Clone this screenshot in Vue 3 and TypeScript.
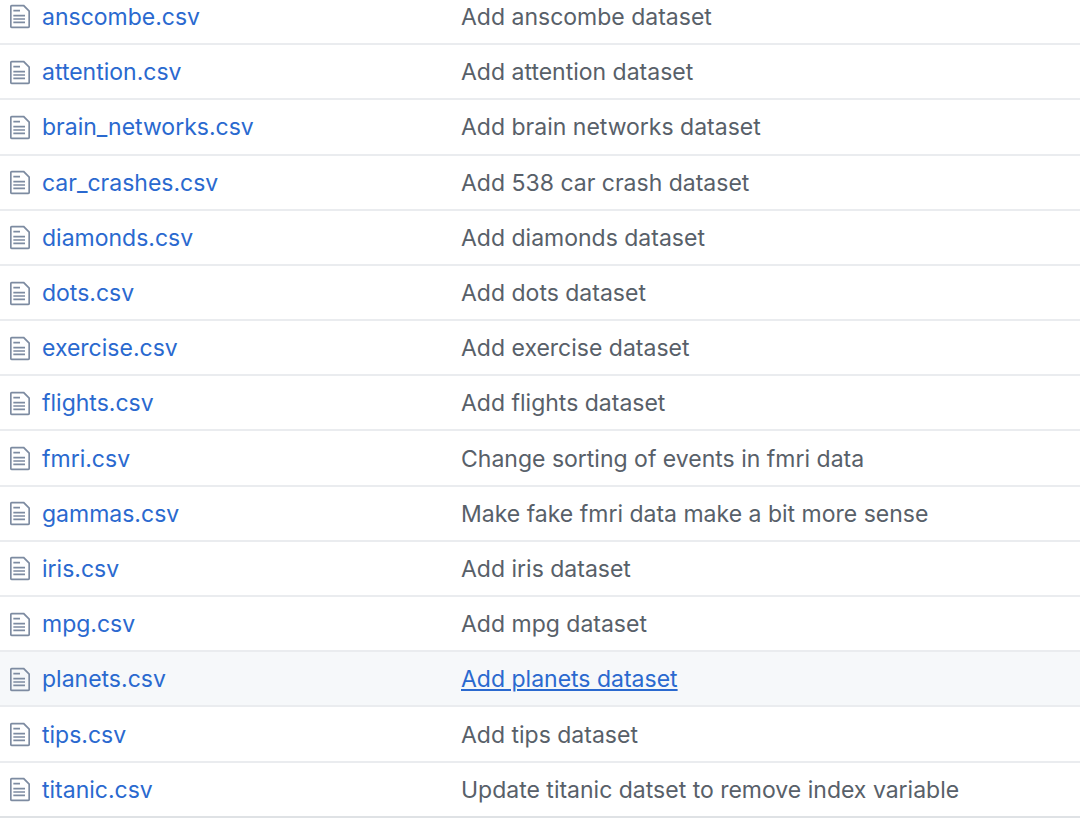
<script setup lang="ts">
interface FileEntry {
  name: string
  message: string
  active?: boolean
}

const files: FileEntry[] = [
  { name: 'anscombe.csv', message: 'Add anscombe dataset' },
  { name: 'attention.csv', message: 'Add attention dataset' },
  { name: 'brain_networks.csv', message: 'Add brain networks dataset' },
  { name: 'car_crashes.csv', message: 'Add 538 car crash dataset' },
  { name: 'diamonds.csv', message: 'Add diamonds dataset' },
  { name: 'dots.csv', message: 'Add dots dataset' },
  { name: 'exercise.csv', message: 'Add exercise dataset' },
  { name: 'flights.csv', message: 'Add flights dataset' },
  { name: 'fmri.csv', message: 'Change sorting of events in fmri data' },
  { name: 'gammas.csv', message: 'Make fake fmri data make a bit more sense' },
  { name: 'iris.csv', message: 'Add iris dataset' },
  { name: 'mpg.csv', message: 'Add mpg dataset' },
  { name: 'planets.csv', message: 'Add planets dataset', active: true },
  { name: 'tips.csv', message: 'Add tips dataset' },
  { name: 'titanic.csv', message: 'Update titanic datset to remove index variable' },
]
</script>

<template>
  <table class="files">
    <tbody>
      <tr v-for="file in files" :key="file.name" :class="{ active: file.active }">
        <td class="name">
          <div class="entry">
            <svg class="icon" viewBox="0 0 12 16" aria-hidden="true">
              <path
                fill-rule="evenodd"
                d="M6 5H2V4h4v1zM2 8h7V7H2v1zm0 2h7V9H2v1zm0 2h7v-1H2v1zm10-7.5V14c0 .55-.45 1-1 1H1c-.55 0-1-.45-1-1V2c0-.55.45-1 1-1h7.5L12 4.5zM11 5L8 2H1v12h10V5z"
              />
            </svg>
            <a href="#">{{ file.name }}</a>
          </div>
        </td>
        <td class="message"><a href="#">{{ file.message }}</a></td>
      </tr>
    </tbody>
  </table>
</template>

<style>
body {
  margin: 0;
  background: #fff;
}
</style>

<style scoped>
.files {
  width: 100%;
  height: 100vh;
  border-collapse: separate;
  border-spacing: 0;
  table-layout: fixed;
  font-family: Inter, "Liberation Sans", sans-serif;
  font-size: 23px;
  line-height: 32px;
}

td {
  box-sizing: border-box;
  height: 55px;
  padding: 1px 0 0;
  border-bottom: 2px solid #eaecef;
  vertical-align: middle;
  white-space: nowrap;
}

tr:first-child td {
  height: 45px;
  padding: 0 0 10px;
}

tr:last-child td {
  border-bottom-color: #dfe2e5;
}

.name {
  width: 461px;
}

.entry {
  display: flex;
  align-items: center;
  gap: 12px;
  padding-left: 10px;
}

.icon {
  flex: none;
  width: 20px;
  height: 27px;
  fill: #7d8ba1;
}

a {
  text-decoration: none;
}

.name a {
  color: #2a69cf;
}

.message a {
  color: #586069;
}

.active td {
  background: #f6f8fa;
}

.active .message a {
  color: #2a69cf;
  text-decoration: underline;
  text-decoration-thickness: 2px;
  text-underline-offset: 2px;
}
</style>
